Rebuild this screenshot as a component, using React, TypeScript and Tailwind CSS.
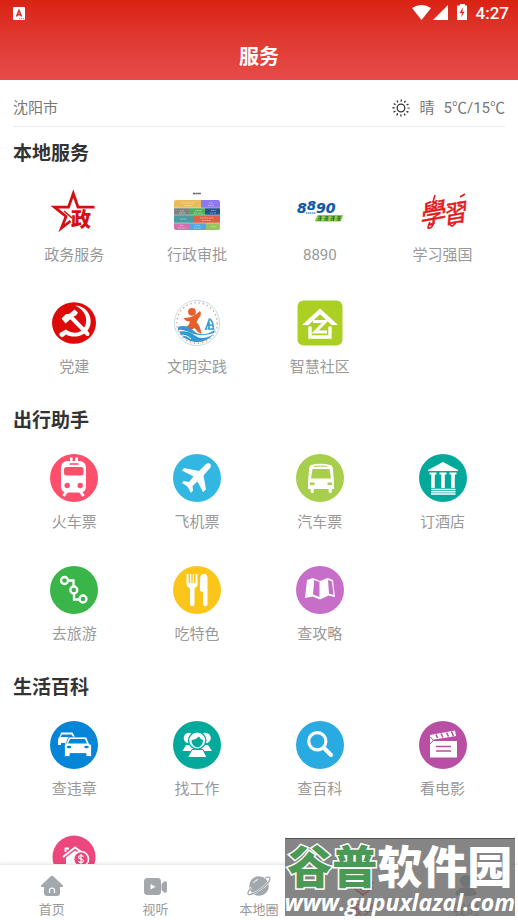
import type { ReactNode } from "react";

interface Service {
  label: string;
  icon: ReactNode;
  hideLabel?: boolean;
}

interface DiscProps {
  color: string;
  children: ReactNode;
}

function Svg({ children }: { children: ReactNode }) {
  return (
    <svg viewBox="0 0 48 48" className="size-12 overflow-visible" aria-hidden="true">
      {children}
    </svg>
  );
}

function Disc({ color, children }: DiscProps) {
  return (
    <Svg>
      <circle cx="24" cy="24" r="24" fill={color} />
      {children}
    </Svg>
  );
}

const GovIcon = (
  <Svg>
    <path
      d="M44.500 20.200H28L23.300 6.500L18.500 20.200H4.500L16 29.500L11.500 41L20.500 34"
      fill="none"
      stroke="#d30f12"
      strokeWidth="2.800"
    />
    <path d="M14 24L22 31" stroke="#d30f12" strokeWidth="1.600" />
    <text x="21" y="40" fontSize="20" fontWeight="900" fill="#d30f12">
      政
    </text>
  </Svg>
);

const ApprovalIcon = (
  <Svg>
    <path d="M20 6.500H28" stroke="#555" strokeWidth="1.600" strokeDasharray="2 .4" />
    <path d="M1 21V15a2 2 0 0 1 2-2H28V21Z" fill="#e9bc5c" />
    <path d="M28 13H45a2 2 0 0 1 2 2V21H28Z" fill="#8d78ee" />
    <path d="M1 21H16V28H1Z" fill="#828282" />
    <path d="M16 21H32V28H16Z" fill="#4fb05c" />
    <path d="M32 21H47V28H32Z" fill="#24548f" />
    <path d="M1 28H20V36H1Z" fill="#4a9ea1" />
    <path d="M20 28H47V36H20Z" fill="#dc6245" />
    <path d="M1 36H16V43H3a2 2 0 0 1-2-2Z" fill="#cd74ae" />
    <path d="M16 36H33V43H16Z" fill="#5aa6d9" />
    <path d="M33 36H47V41a2 2 0 0 1-2 2H33Z" fill="#98c45f" />
    <path d="M1 21H47M1 28H47M1 36H47" stroke="#fff" strokeWidth=".4" />
    <path
      d="M9 16H21M12 18.500H19M36 16H40M35 18.500H41M7 24H11M6 26H12M22 23.500H29M21 26H29M38 23.500H43M37 26H43M7 32H14M27 31H41M29 33.500H38M7 38.500H10M5 41H13M22 38.500H27M21 41H28M38 39.500H43"
      stroke="#fff"
      strokeWidth=".8"
      strokeDasharray="1.200 .5"
      opacity=".6"
    />
  </Svg>
);

const HotlineIcon = (
  <Svg>
    <g
      fontFamily="DejaVu Sans"
      fontWeight="700"
      fontStyle="italic"
      fill="#1159a6"
      stroke="#1159a6"
      strokeWidth=".2"
    >
      <text x="1" y="26" fontSize="14">8</text>
      <text x="11" y="23" fontSize="13">8</text>
      <text x="20" y="26" fontSize="14">90</text>
    </g>
    <path d="M10 26H20" stroke="#1159a6" strokeWidth="1.200" strokeDasharray="1.400 .5" />
    <path d="M22 28H46a1 1 0 0 1 1 1L45 34a1 1 0 0 1-1 .5H20a1 1 0 0 1-1-1L21 29Z" fill="#93c83d" />
    <path
      d="M22.500 29.700h3.500M22 31.400h3.800M21.500 33.100h3.500M24.500 29v5M29 29.700h3.500M28.500 31.400h3.800M28 33.100h3.500M31 29v5M35.500 29.700h3.500M35 31.400h3.800M34.500 33.100h3.500M37.500 29v5M41.500 29.700h3.500M41.200 31.400h3.500M40.700 33.100h3.500M43 29v5"
      stroke="#24753a"
      strokeWidth=".9"
    />
  </Svg>
);

// brush-style 學習 drawn as two slanted characters with trailing strokes
const StudyIcon = (
  <Svg>
    <g fontWeight="400" fontStyle="italic" fill="#e2191d" stroke="#e2191d" strokeWidth=".5">
      <text x="0" y="36" fontSize="26" transform="rotate(-10 12 28)">學</text>
      <text x="23" y="35" fontSize="24" transform="rotate(-10 35 26)">習</text>
    </g>
    <path
      d="M16 8L14 15M11 35Q9 39 9 41Q13 42 15 35M41 10L46 7M31 37Q33 42 37 35"
      fill="none"
      stroke="#e2191d"
      strokeWidth="1.600"
    />
  </Svg>
);

const PartyIcon = (
  <Svg>
    <ellipse cx="24" cy="24" rx="22" ry="20.800" fill="#de0a0a" />
    <path d="M11.500 19.500L16 15H19L24.500 10.500L28 13.500L26 16.500L23.500 17.500L15.500 24.500Z" fill="#fff" />
    <path d="M21 18L37.500 35" stroke="#fff" strokeWidth="4" strokeLinecap="round" />
    <path
      d="M25 6.500C39 7 44.500 22 38 31C32.500 38.500 22 39 16 35.500L13.500 37.500A2.500 2.500 0 1 1 10.500 33.500L16 30.500C23 35.500 30 34.500 34 29C39 21 35.500 11 25 6.500Z"
      fill="#fff"
    />
  </Svg>
);

const CivilIcon = (
  <Svg>
    <circle cx="24" cy="24" r="22.500" fill="#fff" stroke="#b5dbe5" strokeWidth=".9" />
    <circle cx="24" cy="24" r="20.300" fill="none" stroke="#e6a99b" strokeWidth="1.500" strokeDasharray="1.400 2.800" />
    <circle cx="19" cy="12.800" r="3.900" fill="#e5602d" />
    <path
      d="M10.500 19C16 19.500 22 17 27 12Q29 15 26.500 18L23.500 23Q27.500 27 28.500 35Q24 33 21.500 29Q18 32 12 32L11.500 29Q16 27 17 22.500Q13 23 10.500 19Z"
      fill="#e5602d"
    />
    <path
      d="M32.500 31L36.500 20Q40 21 40.500 31M34 26H40M34.500 30H40.500M36 23V30"
      fill="none"
      stroke="#389fd0"
      strokeWidth="1.700"
    />
    <path d="M5 28Q13 25 21 32T42 31L41 34Q30 38 19 34.500Q12 30 5 31Z" fill="#3499cf" />
    <path d="M6 32.500Q15 31 22 36.500T40 35.500Q33 44 22 43Q10 41 6 32.500Z" fill="#3499cf" />
    <path d="M9 36Q14 36 18 40" stroke="#fff" fill="none" />
  </Svg>
);

const CommunityIcon = (
  <Svg>
    <rect x="1.500" y="1.500" width="45" height="45" rx="6" fill="#abd023" />
    <path d="M6 26L24 9.500L42 26H35.500L24 15.200L12.500 26Z" fill="#fff" />
    <path d="M14 27.500V38H34V27.500" fill="none" stroke="#fff" strokeWidth="3.400" />
    <path d="M17 22.500H29.500L19 33H31" fill="none" stroke="#fff" strokeWidth="3" />
  </Svg>
);

const TrainIcon = (
  <Disc color="#ff4f6c">
    <path d="M20 3.500h2.600V8H20ZM25.300 3.500h2.600V8h-2.600Z" fill="#fff" />
    <path d="M17 7H30Q36 8 36 14V32Q36 38.500 30 38.500H17Q11 38.500 11 32V14Q11 8 17 7Z" fill="#fff" />
    <path d="M19.500 10H28.500" stroke="#ff4f6c" strokeWidth="1.600" />
    <rect x="14" y="13" width="19.500" height="8.500" rx="2.500" fill="#ff4f6c" />
    <circle cx="17.200" cy="31.500" r="2.700" fill="#ff4f6c" />
    <circle cx="30.200" cy="31.500" r="2.700" fill="#ff4f6c" />
    <path d="M17 37L13.500 42M30 37L33.500 42" stroke="#fff" strokeWidth="3" />
  </Disc>
);

const PlaneIcon = (
  <Disc color="#32b6e2">
    <path
      d="M33 10C36 8 39 10 37.500 13.500L30.500 21.500L33 35.500L30 38L24.500 27.500L19.500 32L20 36.500L18 39L15 33.500Q14 31.500 9 29L10.500 27L16 28L20.500 22.500L9 16.500L11 14L26 17Z"
      fill="#fff"
    />
  </Disc>
);

const BusIcon = (
  <Disc color="#a8cf4c">
    <path d="M15 11Q24 8.500 34.500 11Q37 12 37 16L38 28V35H12V28L13 16Q13 12 15 11Z" fill="#fff" />
    <path d="M18 12.500Q24 11.500 31 12.500" stroke="#a8cf4c" fill="none" />
    <path d="M16.500 15H33.500L35 24.500H15Z" fill="#a8cf4c" />
    <path d="M14 28.500H18.500V31H14ZM31.500 28.500H36V31H31.500Z" fill="#a8cf4c" />
    <path d="M16.200 34V37.500M34.200 34V37.500" stroke="#fff" strokeWidth="3.200" strokeLinecap="round" />
  </Disc>
);

const HotelIcon = (
  <Disc color="#02a99a">
    <path d="M9 16L24 8L39 16V17H9Z" fill="#fff" />
    <path
      d="M10.500 18.500H17.500V20.500H15.800V34H12.300V20.500H10.500ZM20.500 18.500H27.500V20.500H25.800V34H22.300V20.500H20.500ZM30.500 18.500H37.500V20.500H35.800V34H32.300V20.500H30.500Z"
      fill="#fff"
    />
    <path d="M12 35.500H36.500M12 37.700H36.500M12 40H36.500" stroke="#fff" strokeWidth="1.400" />
  </Disc>
);

const TourIcon = (
  <Disc color="#39b54a">
    <g fill="none" stroke="#fff" strokeWidth="2.300">
      <circle cx="14.500" cy="14.500" r="3.500" />
      <circle cx="23.800" cy="24" r="3.500" />
      <circle cx="33" cy="33" r="3.500" />
      <path d="M18 14.500H23.500V20.500M24 27.500V33.500H29.500" />
    </g>
  </Disc>
);

const FoodIcon = (
  <Disc color="#fbc619">
    <path
      d="M13.500 8H15.500V17H17V8H18.300V17H19.700V8H21V17H22.500V8H24.500V18Q24.500 21 21.500 22V38a2 2 0 0 1-4.500 0V22Q13.500 21 13.500 18Z"
      fill="#fff"
    />
    <path d="M27 25V13Q27 8 31 8Q34.500 8 34.500 12V38a2 2 0 0 1-4.500 0V26Z" fill="#fff" />
  </Disc>
);

const MapIcon = (
  <Disc color="#c76ec9">
    <path d="M11 14L17 12L24 15L31.500 12L37 14L39 31L32.500 29.500L24 33.500L16.500 30.500L9 32Z" fill="#fff" />
    <path d="M18 14L23.500 16V31L17 28.500ZM32 14L36 15.500L37.500 29L33 27.500Z" fill="#c76ec9" />
    <path d="M17.200 13L16 30" stroke="#fff" strokeWidth="1.400" />
  </Disc>
);

const CarIcon = (
  <Disc color="#0485d8">
    <path d="M11 11.500H22.500L25 16V24H8V18L10 15Z" fill="#fff" />
    <path d="M12 13.500H21.500L23 16H10.500ZM11 22H15V25H11Z" fill="#0485d8" />
    <path
      d="M18.500 16H36.500L39 22.500L41.500 24V35.500H36V32.500H20V35.500H14.500V24L16.500 22Z"
      fill="#fff"
      stroke="#0485d8"
      strokeWidth=".8"
    />
    <path d="M20 18H35L37 22.500H18Z" fill="#0485d8" />
    <ellipse cx="19" cy="26" rx="2.300" ry="1.300" fill="#0485d8" />
    <ellipse cx="36.500" cy="26" rx="2.300" ry="1.300" fill="#0485d8" />
  </Disc>
);

const JobIcon = (
  <Disc color="#03aa9b">
    <circle cx="16" cy="17" r="5.300" fill="#fff" />
    <circle cx="32.500" cy="17" r="5.300" fill="#fff" />
    <path d="M13 24H35L39 30H9.500Z" fill="#fff" />
    <circle cx="24.200" cy="19.500" r="8.600" fill="#fff" stroke="#03aa9b" strokeWidth="1.400" />
    <path d="M18.500 19Q22 19 26 15.500Q27 18 30 19Q30 25.500 24.200 26.500Q18.500 25 18.500 19Z" fill="#03aa9b" />
    <path d="M19 28.500H30L34 36.500H14.500Z" fill="#fff" stroke="#03aa9b" />
  </Disc>
);

const SearchIcon = (
  <Disc color="#29abe2">
    <circle cx="21.300" cy="20.300" r="8.600" fill="none" stroke="#fff" strokeWidth="3.200" />
    <path d="M28 27L35 34" stroke="#fff" strokeWidth="4" strokeLinecap="round" />
  </Disc>
);

const MovieIcon = (
  <Disc color="#b94fa5">
    <path d="M11 20H38V36.500H11Z" fill="#fff" />
    <path d="M17 25.500H32M17 30H32" stroke="#b94fa5" strokeWidth="1.300" />
    <path d="M11 14L36 9.500L37 15L15 18.500L11 22Z" fill="#fff" />
    <path
      d="M17 13.500L18.500 17M22 12.500L24 16.500M27.500 11.500L29.500 15.500M32.500 10.500L34.500 15"
      stroke="#b94fa5"
      strokeWidth="1.600"
    />
    <path d="M11.500 16L14.500 19.500L11 23" stroke="#b94fa5" fill="none" />
  </Disc>
);

const LoanIcon = (
  <Svg>
    <circle cx="24" cy="24" r="21.500" fill="#ec487d" />
    <path d="M13 24L25 14.500L34 21" fill="none" stroke="#fff" strokeWidth="1.800" />
    <path d="M15.500 19V15.500H19" fill="none" stroke="#fff" strokeWidth="1.800" />
    <path d="M16 24.500L25 17.500L30 21V38H16Z" fill="#fff" />
    <circle cx="31" cy="26" r="7.500" fill="#ec487d" stroke="#fff" strokeWidth="1.600" />
    <path
      d="M33.500 23.800Q33 22.500 31 22.500T28.600 24.200Q28.600 25.500 31 26T33.500 28Q33.300 29.600 31 29.600T28.500 28.200M31 21V31"
      fill="none"
      stroke="#fff"
      strokeWidth="1.200"
    />
  </Svg>
);

const sections: { title: string; items: Service[] }[] = [
  {
    title: "本地服务",
    items: [
      { label: "政务服务", icon: GovIcon },
      { label: "行政审批", icon: ApprovalIcon },
      { label: "8890", icon: HotlineIcon },
      { label: "学习强国", icon: StudyIcon },
      { label: "党建", icon: PartyIcon },
      { label: "文明实践", icon: CivilIcon },
      { label: "智慧社区", icon: CommunityIcon },
    ],
  },
  {
    title: "出行助手",
    items: [
      { label: "火车票", icon: TrainIcon },
      { label: "飞机票", icon: PlaneIcon },
      { label: "汽车票", icon: BusIcon },
      { label: "订酒店", icon: HotelIcon },
      { label: "去旅游", icon: TourIcon },
      { label: "吃特色", icon: FoodIcon },
      { label: "查攻略", icon: MapIcon },
    ],
  },
  {
    title: "生活百科",
    items: [
      { label: "查违章", icon: CarIcon },
      { label: "找工作", icon: JobIcon },
      { label: "查百科", icon: SearchIcon },
      { label: "看电影", icon: MovieIcon },
      { label: "房贷", icon: LoanIcon, hideLabel: true },
    ],
  },
];

const tabs = [
  {
    label: "首页",
    icon: (
      <>
        <path d="M10.500 2.500Q12 1.200 13.500 2.500L23 11.500Q23.500 13 22 13H20V19Q20 22 17 22H7Q4 22 4 19V13H2Q.5 13 1 11.500Z" />
        <path d="M9.500 19V16.500a2.500 2.500 0 0 1 5 0V19" fill="none" stroke="#fff" strokeWidth="1.200" />
      </>
    ),
  },
  {
    label: "视听",
    icon: (
      <>
        <rect x="1" y="4" width="17" height="17" rx="3.500" />
        <path d="M18.500 10L21 7.500Q24 6.500 24 9V17Q24 19.500 21 18.500L18.500 16Z" />
        <path d="M7.500 10L12.500 12.700L7.500 15.500Z" fill="#fff" />
      </>
    ),
  },
  {
    label: "本地圈",
    icon: (
      <>
        <circle cx="12" cy="12" r="9.800" />
        <path
          d="M18 4Q22.500 2 23 4.500Q23 8 14.500 14.500T1.500 20.500Q-.5 19 4.500 13.500"
          fill="none"
          stroke="#fff"
          strokeWidth="2.200"
        />
        <path
          d="M18 4Q22.500 2 23 4.500Q23 8 14.500 14.500T1.500 20.500Q-.5 19 4.500 13.500"
          fill="none"
          stroke="currentColor"
          strokeWidth="1.300"
        />
        <path d="M6.500 9Q8 6 11 5.500" fill="none" stroke="#fff" />
      </>
    ),
  },
  {
    label: "服务",
    active: true,
    icon: (
      <>
        <path d="M12 1L23 9L12 18L1 9Z" />
        <path d="M2 13L12 21L22 13" fill="none" stroke="currentColor" strokeWidth="2" />
      </>
    ),
  },
  {
    label: "我的",
    icon: (
      <>
        <circle cx="12" cy="7" r="6" />
        <path d="M1 20Q3 13 12 13T23 20Q22 22 12 22T1 20Z" />
      </>
    ),
  },
];

function StatusBar() {
  return (
    <div className="flex h-[26px] items-center justify-between pr-[9px] pl-[13px]">
      <svg viewBox="0 0 12 13" className="h-[13px] w-3" aria-hidden="true">
        <rect width="12" height="13" rx="1" fill="#fff" />
        <path d="M3.500 9.500L6 3.500L8.500 9.500M4.500 7.700H7.500" fill="none" stroke="#d9291c" strokeWidth="1.500" />
        <path d="M6 11.700H11" stroke="#d9291c" strokeWidth=".7" strokeDasharray="1.400 .6" />
      </svg>
      <div className="flex items-center text-white">
        <svg viewBox="0 0 56 18" className="h-[18px] w-14" fill="currentColor" aria-hidden="true">
          <path d="M0 4Q9.500-2 19 4L9.500 16Z" />
          <path d="M36 1V16H21Z" />
          <path fillRule="evenodd" d="M48 0H53V1.500H55V16H45V1.500H48ZM51 3.500L47.500 9H50L49 13.500L52.500 7.800H50.500Z" />
        </svg>
        <span className="ml-2 text-[17px] leading-6 font-medium">4:27</span>
      </div>
    </div>
  );
}

function WeatherBar() {
  return (
    <div className="mx-[13px] flex h-[47px] items-center justify-between border-b border-[#ececec] pt-[10px] text-[15px] text-[#777]">
      <span>沈阳市</span>
      <div className="flex items-center">
        <svg viewBox="0 0 18 18" className="size-[18px]" fill="none" stroke="#333" aria-hidden="true">
          <circle cx="9" cy="9" r="3.800" strokeWidth="1.300" />
          <circle
            cx="9"
            cy="9"
            r="7.400"
            strokeWidth="2.200"
            strokeDasharray="1.300 2.574"
            strokeDashoffset=".65"
          />
        </svg>
        <span className="ml-[10px]">晴</span>
        <span className="ml-[9px]">5℃/15℃</span>
      </div>
    </div>
  );
}

function ServiceSection({ title, items }: { title: string; items: Service[] }) {
  return (
    <section>
      <h2 className="text-[19px] leading-7 font-bold text-[#333]">{title}</h2>
      <div className="mt-[19px] grid grid-cols-4 gap-y-8 pr-px">
        {items.map((item) => (
          <button
            key={item.label}
            type="button"
            aria-label={item.label}
            className="flex flex-col items-center gap-2"
          >
            {item.icon}
            {!item.hideLabel && <span className="text-[15px] leading-6 text-[#999]">{item.label}</span>}
          </button>
        ))}
      </div>
    </section>
  );
}

function TabBar() {
  return (
    <nav className="flex h-14 shrink-0 border-t border-[#ececec] bg-white shadow-[0_-1px_3px_rgba(0,0,0,0.08)]">
      {tabs.map((tab) => (
        <button
          key={tab.label}
          type="button"
          className="flex flex-1 flex-col items-center gap-[2px] pt-[9px]"
        >
          <svg
            viewBox="0 0 24 24"
            className={tab.active ? "size-6 text-[#e33a34]" : "size-6 text-[#a2a8ac]"}
            fill="currentColor"
            aria-hidden="true"
          >
            {tab.icon}
          </svg>
          <span className={tab.active ? "text-[13px] leading-5 text-[#e33a34]" : "text-[13px] leading-5 text-[#999]"}>
            {tab.label}
          </span>
        </button>
      ))}
    </nav>
  );
}

function SiteBadge() {
  return (
    <div className="absolute right-[3px] bottom-1 flex h-[78px] flex-col items-center border-t border-[#555] bg-[#666]/80 pt-[9px] whitespace-nowrap text-white">
      <div className="text-[45px] leading-[42px] font-black">
        <span className="text-[#4a9a55] [-webkit-text-stroke:3px_white] [paint-order:stroke]">谷普</span>
        <span>软件园</span>
      </div>
      <div className="font-['Open_Sans',sans-serif] text-[23px] leading-6 font-bold italic">www.gupuxlazal.com</div>
    </div>
  );
}

export default function App() {
  return (
    <div className="relative flex h-screen flex-col overflow-hidden bg-white font-['Roboto','Noto_Sans_CJK_SC',sans-serif]">
      <header className="shrink-0 bg-linear-to-b from-[#d92211] to-[#e74b49]">
        <StatusBar />
        <h1 className="h-[54px] pt-[17px] text-center text-[20px] leading-7 font-bold text-white">服务</h1>
      </header>
      <main className="min-h-0 flex-1 overflow-hidden">
        <WeatherBar />
        <div className="flex flex-col gap-7 px-[13px] pt-[13px]">
          {sections.map((section) => (
            <ServiceSection key={section.title} {...section} />
          ))}
        </div>
      </main>
      <TabBar />
      <SiteBadge />
    </div>
  );
}
